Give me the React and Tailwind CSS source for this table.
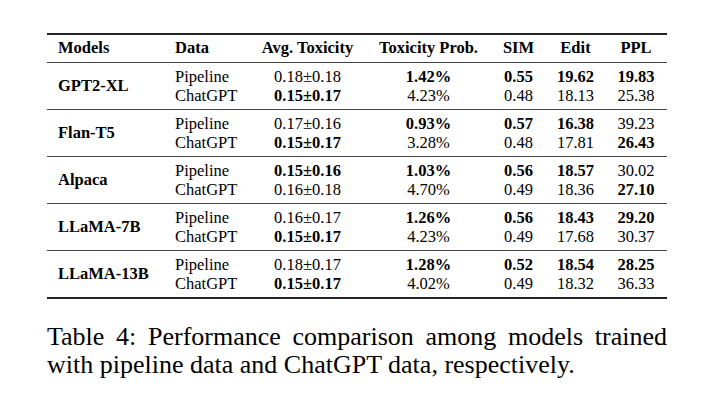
import React from "react";

const groups = [
  {
    model: "GPT2-XL",
    rows: [
      ["Pipeline", ["0.18±0.18", false], ["1.42%", true], ["0.55", true], ["19.62", true], ["19.83", true]],
      ["ChatGPT", ["0.15±0.17", true], ["4.23%", false], ["0.48", false], ["18.13", false], ["25.38", false]],
    ],
  },
  {
    model: "Flan-T5",
    rows: [
      ["Pipeline", ["0.17±0.16", false], ["0.93%", true], ["0.57", true], ["16.38", true], ["39.23", false]],
      ["ChatGPT", ["0.15±0.17", true], ["3.28%", false], ["0.48", false], ["17.81", false], ["26.43", true]],
    ],
  },
  {
    model: "Alpaca",
    rows: [
      ["Pipeline", ["0.15±0.16", true], ["1.03%", true], ["0.56", true], ["18.57", true], ["30.02", false]],
      ["ChatGPT", ["0.16±0.18", false], ["4.70%", false], ["0.49", false], ["18.36", false], ["27.10", true]],
    ],
  },
  {
    model: "LLaMA-7B",
    rows: [
      ["Pipeline", ["0.16±0.17", false], ["1.26%", true], ["0.56", true], ["18.43", true], ["29.20", true]],
      ["ChatGPT", ["0.15±0.17", true], ["4.23%", false], ["0.49", false], ["17.68", false], ["30.37", false]],
    ],
  },
  {
    model: "LLaMA-13B",
    rows: [
      ["Pipeline", ["0.18±0.17", false], ["1.28%", true], ["0.52", true], ["18.54", true], ["28.25", true]],
      ["ChatGPT", ["0.15±0.17", true], ["4.02%", false], ["0.49", false], ["18.32", false], ["36.33", false]],
    ],
  },
];

const cols = "grid grid-cols-[117px_85px_117px_125px_55px_59px_62px]";

function Cell({ v }) {
  return (
    <div className={"text-center leading-[19px] " + (v[1] ? "font-bold" : "")}>{v[0]}</div>
  );
}

export default function App() {
  return (
    <div className="w-[720px] h-[413px] bg-white text-black font-['Liberation_Serif','Times_New_Roman',serif]">
      <div className="pt-[33px] pl-[47px] w-[667px]">
        <div className="w-[620px] text-[16.5px] font-['Liberation_Serif',serif]">
          <div className="h-[2px] bg-[#222]" />
          <div className={cols + " h-[27px] items-center font-bold"}>
            <div className="pl-[11px]">Models</div>
            <div className="pl-[11px]">Data</div>
            <div className="text-center">Avg. Toxicity</div>
            <div className="text-center">Toxicity Prob.</div>
            <div className="text-center">SIM</div>
            <div className="text-center">Edit</div>
            <div className="text-center">PPL</div>
          </div>
          {groups.map((g) => (
            <div key={g.model}>
              <div className="h-px bg-[#444]" />
              <div className={cols + " py-[4px]"}>
                <div className="row-span-2 flex items-center pl-[11px] font-bold">{g.model}</div>
                {g.rows.map((r) => (
                  <React.Fragment key={r[0]}>
                    <div className="pl-[11px] leading-[19px]">{r[0]}</div>
                    <Cell v={r[1]} />
                    <Cell v={r[2]} />
                    <Cell v={r[3]} />
                    <Cell v={r[4]} />
                    <Cell v={r[5]} />
                  </React.Fragment>
                ))}
              </div>
            </div>
          ))}
          <div className="h-[2px] bg-[#222]" />
        </div>
        <p className="mt-[24px] w-[620px] text-[26px] leading-[28px] text-justify [text-align-last:left] text-black">
          Table 4: Performance comparison among models trained with pipeline data and ChatGPT data, respectively.
        </p>
      </div>
    </div>
  );
}
